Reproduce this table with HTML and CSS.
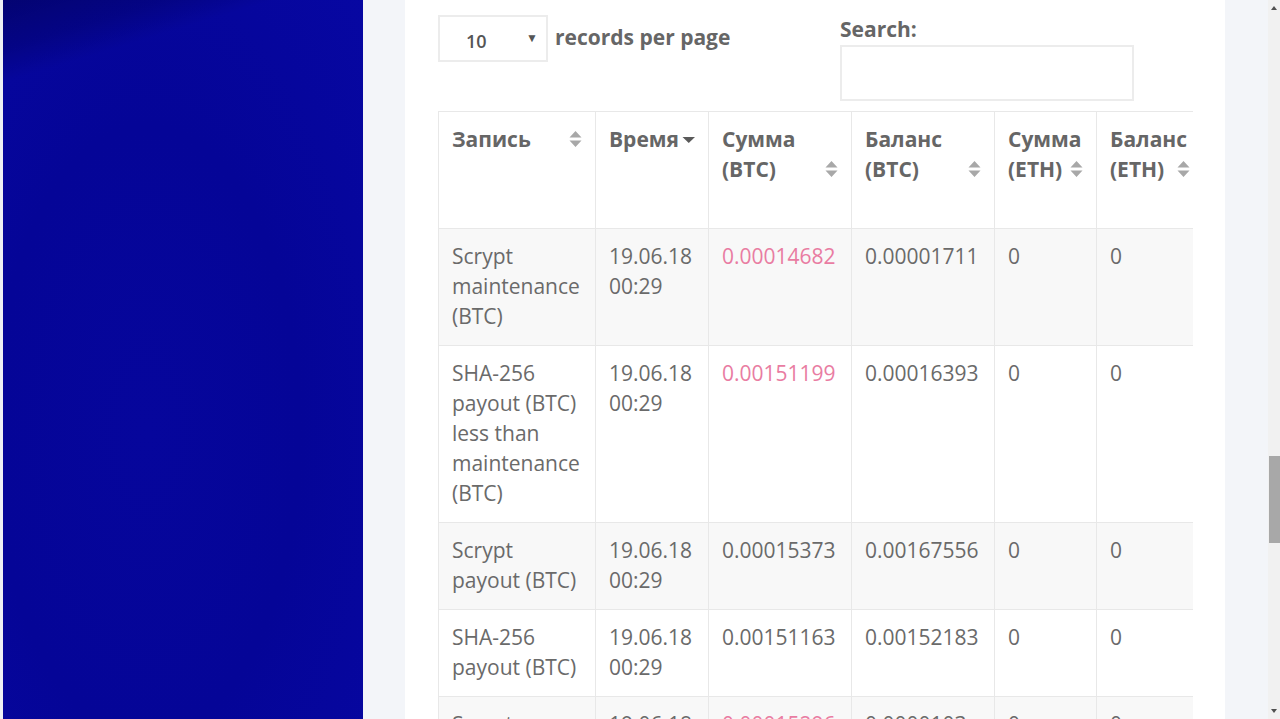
FILE: index.html
```html
<!DOCTYPE html>
<html lang="ru">
<head>
<meta charset="utf-8">
<title>Records</title>
<link rel="stylesheet" href="styles.css">
</head>
<body>
<div class="page">
  <div class="edge"></div>
  <aside class="sidebar"></aside>
  <div class="gutter"></div>
  <main class="card">
    <div class="toolbar">
      <div class="length">
        <div class="select"><span class="sel-val">10</span><span class="sel-arrow">▼</span></div>
        <span class="length-label">records per page</span>
      </div>
      <div class="search">
        <label class="search-label">Search:</label>
        <div class="search-input"></div>
      </div>
    </div>
    <div class="table-wrap">
      <table class="records">
        <colgroup>
          <col class="c1"><col class="c2"><col class="c3"><col class="c4"><col class="c5"><col class="c6">
        </colgroup>
        <thead>
          <tr>
            <th><div class="th"><span class="tt">Запись</span><span class="sort"><svg width="13" height="18" viewBox="0 0 13 18"><path d="M6.5 1 L12.5 7.5 H0.5 Z M6.5 17 L12.5 10.5 H0.5 Z" fill="#a8a8a8"/></svg></span></div></th>
            <th><div class="th"><span class="tt">Время</span><span class="sort"><svg width="13" height="18" viewBox="0 0 13 18"><path d="M0.5 7 H13 L6.75 13 Z" fill="#5a5a5a"/></svg></span></div></th>
            <th><div class="th"><span class="tt">Сумма (BTC)</span><span class="sort"><svg width="13" height="18" viewBox="0 0 13 18"><path d="M6.5 1 L12.5 7.5 H0.5 Z M6.5 17 L12.5 10.5 H0.5 Z" fill="#a8a8a8"/></svg></span></div></th>
            <th><div class="th"><span class="tt">Баланс (BTC)</span><span class="sort"><svg width="13" height="18" viewBox="0 0 13 18"><path d="M6.5 1 L12.5 7.5 H0.5 Z M6.5 17 L12.5 10.5 H0.5 Z" fill="#a8a8a8"/></svg></span></div></th>
            <th><div class="th"><span class="tt">Сумма (ETH)</span><span class="sort"><svg width="13" height="18" viewBox="0 0 13 18"><path d="M6.5 1 L12.5 7.5 H0.5 Z M6.5 17 L12.5 10.5 H0.5 Z" fill="#a8a8a8"/></svg></span></div></th>
            <th><div class="th"><span class="tt">Баланс (ETH)</span><span class="sort"><svg width="13" height="18" viewBox="0 0 13 18"><path d="M6.5 1 L12.5 7.5 H0.5 Z M6.5 17 L12.5 10.5 H0.5 Z" fill="#a8a8a8"/></svg></span></div></th>
          </tr>
        </thead>
        <tbody>
          <tr class="odd">
            <td>Scrypt maintenance (BTC)</td><td>19.06.18 00:29</td><td class="neg">0.00014682</td><td>0.00001711</td><td>0</td><td>0</td>
          </tr>
          <tr>
            <td>SHA-256 payout (BTC) less than maintenance (BTC)</td><td>19.06.18 00:29</td><td class="neg">0.00151199</td><td>0.00016393</td><td>0</td><td>0</td>
          </tr>
          <tr class="odd">
            <td>Scrypt payout (BTC)</td><td>19.06.18 00:29</td><td>0.00015373</td><td>0.00167556</td><td>0</td><td>0</td>
          </tr>
          <tr>
            <td>SHA-256 payout (BTC)</td><td>19.06.18 00:29</td><td>0.00151163</td><td>0.00152183</td><td>0</td><td>0</td>
          </tr>
          <tr class="odd">
            <td>Scrypt maintenance (BTC)</td><td>19.06.18 00:29</td><td class="neg">0.00015296</td><td>0.0000103</td><td>0</td><td>0</td>
          </tr>
        </tbody>
      </table>
    </div>
  </main>
  <div class="gutter-r"></div>
  <div class="scrollbar">
    <span class="sb-arrow up"></span>
    <div class="sb-track"><div class="sb-thumb"></div></div>
    <span class="sb-arrow down"></span>
  </div>
</div>
</body>
</html>
```
FILE: styles.css
```css
html, body {
  margin: 0;
  padding: 0;
  height: 719px;
  overflow: hidden;
  background: #f3f5f9;
  font-family: "Open Sans", "Liberation Sans", sans-serif;
  color: #666;
}

.page {
  display: flex;
  height: 719px;
}

.edge {
  width: 3px;
  flex: none;
  background: #eef0f4;
}

.sidebar {
  width: 360px;
  flex: none;
  background:
    linear-gradient(163deg, rgba(0,0,70,0.5) 0%, rgba(0,0,80,0.3) 6%, rgba(0,0,0,0) 10%),
    radial-gradient(ellipse at 40% 60%, #06069c 0%, #050597 50%, #0707a2 100%);
  background-color: #0606a0;
}

.gutter {
  width: 42px;
  flex: none;
}

.card {
  width: 820px;
  flex: none;
  background: #fff;
  padding: 15px 32px 0 33px;
  box-sizing: border-box;
  overflow: hidden;
}

.gutter-r {
  width: 43px;
  flex: none;
}

.scrollbar {
  width: 12px;
  flex: none;
  background: #f1f1f1;
  display: flex;
  flex-direction: column;
  align-items: center;
}

.sb-arrow {
  width: 0;
  height: 0;
  border-left: 3px solid transparent;
  border-right: 3px solid transparent;
  flex: none;
}

.sb-arrow.up {
  border-bottom: 4px solid #505050;
  margin-top: 6px;
}

.sb-arrow.down {
  border-top: 4px solid #505050;
  margin-bottom: 6px;
}

.sb-track {
  flex: 1;
  width: 100%;
  padding-top: 446px;
  box-sizing: border-box;
}

.sb-thumb {
  height: 87px;
  width: 11px;
  margin-left: 1px;
  background: #a8a8a8;
}

/* toolbar */
.toolbar {
  display: grid;
  grid-template-columns: 402px 294px;
  align-items: start;
}

.length {
  display: flex;
  align-items: center;
}

.select {
  width: 110px;
  height: 47px;
  box-sizing: border-box;
  border: 2px solid #ececec;
  display: flex;
  align-items: center;
  padding: 4px 8px 0 26px;
}

.sel-val {
  font-size: 18px;
  font-weight: 600;
  color: #555;
  flex: 1;
}

.sel-arrow {
  font-size: 12px;
  color: #555;
  margin-top: -6px;
}

.length-label {
  font-size: 21px;
  font-weight: 700;
  color: #666;
  margin-left: 7px;
  margin-top: -4px;
}

.search {
  display: flex;
  flex-direction: column;
}

.search-label {
  font-size: 21px;
  font-weight: 700;
  color: #666;
  line-height: 30px;
  margin-top: -1px;
  margin-bottom: 1px;
}

.search-input {
  height: 56px;
  box-sizing: border-box;
  border: 2px solid #ececec;
  background: #fff;
}

/* table */
.table-wrap {
  margin-top: 10px;
  width: 755px;
  overflow: hidden;
}

.records {
  border-collapse: collapse;
  table-layout: fixed;
  width: 765px;
  font-size: 21px;
  line-height: 30px;
}

.c1 { width: 157px; }
.c2 { width: 113px; }
.c3 { width: 143px; }
.c4 { width: 143px; }
.c5 { width: 102px; }
.c6 { width: 107px; }

.records th,
.records td {
  border: 1px solid #e8e8e8;
  padding: 12px 13px 14px 13px;
  vertical-align: top;
  text-align: left;
}

.records th {
  padding-bottom: 44px;
  font-weight: 700;
  color: #666;
}

.th {
  display: flex;
  align-items: flex-end;
}

.tt {
  flex: 1 1 0;
  min-width: 0;
}

.sort {
  flex: none;
  height: 30px;
  display: flex;
  align-items: center;
}

.records td {
  color: #6a6a6a;
}

.records tr.odd td {
  background: #f8f8f8;
}

.records td.neg {
  color: #e97ca2;
}
```
